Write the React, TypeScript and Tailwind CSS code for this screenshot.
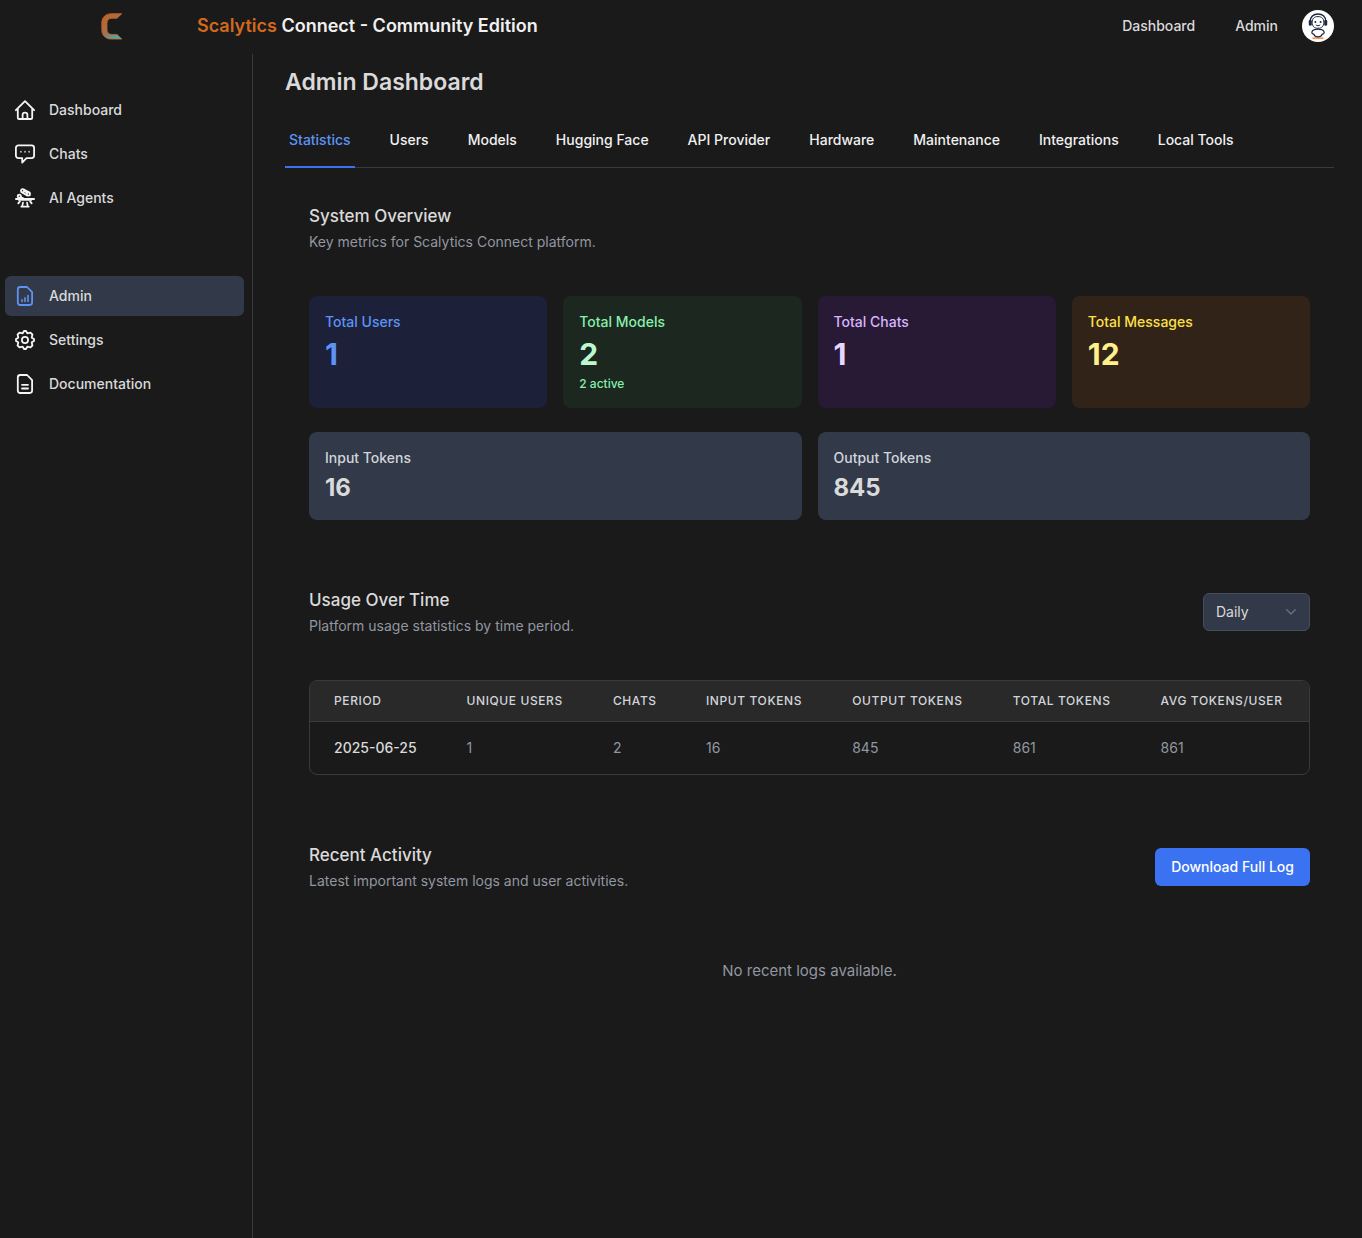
import React from 'react';

const cards = [
  { label: 'Total Users', value: '1', box: 'bg-[#1c2039]', labelColor: 'text-[#5d93f4]', valueColor: 'text-[#5d93f4]' },
  { label: 'Total Models', value: '2', note: '2 active', box: 'bg-[#1c271f]', labelColor: 'text-[#86efac]', valueColor: 'text-[#bbf7d0]' },
  { label: 'Total Chats', value: '1', box: 'bg-[#281934]', labelColor: 'text-[#d8b4fe]', valueColor: 'text-[#e9d5ff]' },
  { label: 'Total Messages', value: '12', box: 'bg-[#312318]', labelColor: 'text-[#fde047]', valueColor: 'text-[#fef08a]' },
];

const tabs = ['Statistics', 'Users', 'Models', 'Hugging Face', 'API Provider', 'Hardware', 'Maintenance', 'Integrations', 'Local Tools'];
const columns = ['Period', 'Unique Users', 'Chats', 'Input Tokens', 'Output Tokens', 'Total Tokens', 'Avg Tokens/User'];
const row = ['2025-06-25', '1', '2', '16', '845', '861', '861'];

function Icon({ children }: { children: React.ReactNode }) {
  return (
    <svg viewBox="0 0 20 20" className="size-5 shrink-0" fill="none" stroke="currentColor" strokeWidth="1.8" strokeLinecap="round" strokeLinejoin="round" aria-hidden="true">
      {children}
    </svg>
  );
}

const HomeIcon = () => (
  <Icon>
    <path d="M.9 10.2 10 1.1l9.1 9.1M2.8 8.6v9.1c0 .8.5 1.3 1.3 1.3h11.8c.8 0 1.300-.5 1.300-1.300V8.600" />
    <path d="M7.600 19v-4.300c0-1.200.9-2 2.400-2s2.400.8 2.400 2V19" />
  </Icon>
);

const ChatIcon = () => (
  <Icon>
    <path d="M3.400 1.400h13.200c1.500 0 2.500 1 2.500 2.500v7.700c0 1.500-1 2.500-2.500 2.500h-5.100L7.200 18.600v-4.500H3.400c-1.500 0-2.500-1-2.500-2.500V3.900c0-1.500 1-2.500 2.500-2.500Z" />
    <path d="M5.900 7.800h.01M10 7.800h.01M14.100 7.800h.01" strokeWidth="1.900" opacity=".7" />
  </Icon>
);

const AgentsIcon = () => (
  <Icon>
    <path d="M1 11h18" strokeWidth="2" />
    <path d="M3.600 12.200h12.800" strokeWidth="1.200" />
    <circle cx="4.300" cy="8.200" r="1.600" />
    <path d="m5.600 9 3 1.600" />
    <circle cx="7.600" cy="2.700" r="1.600" />
    <circle cx="13.400" cy="6" r="1.600" />
    <path d="m8.900 1.600 5.600 3M6.700 4.300l5.500 3.100M10 3.500l1.200.7" strokeWidth="1.800" />
    <path d="m3.300 15.400 1.600-2M16.700 15.400l-1.600-2" />
    <path d="m8 14.500-.8 3.800M12 14.500l.8 3.800M6.300 18.700h7.400" strokeWidth="1.700" />
  </Icon>
);

const filePath = 'M5.200 1h6.900L17.100 6.200v10.400c0 1.500-.9 2.400-2.400 2.400H5.200c-1.500 0-2.400-.9-2.400-2.400V3.400C2.800 1.900 3.700 1 5.200 1Z';

const ReportIcon = () => (
  <Icon>
    <path d={filePath} />
    <path d="M7 13.800v1.600M10 11.800v3.600M13 9.600v5.800" strokeWidth="1.600" />
  </Icon>
);

const DocumentIcon = () => (
  <Icon>
    <path d={filePath} />
    <path d="M7 10.800h6M7 14.500h6" />
  </Icon>
);

const GearIcon = () => (
  <Icon>
    <circle cx="10" cy="10" r="3.100" />
    <path d="M9 1h2l1.300 2.300 3.200-.7 1.900 1.900-.7 3.200L19 9v2l-2.300 1.300.7 3.200-1.900 1.900-3.200-.7L11 19H9l-1.300-2.300-3.200.7-1.900-1.900.7-3.200L1 11V9l2.300-1.300-.7-3.200 1.900-1.900 3.200.7Z" />
  </Icon>
);

function Logo() {
  return (
    <svg viewBox="0 0 22 27" className="h-[27px] w-[22px]" aria-label="Scalytics">
      <defs>
        <linearGradient id="logo-fill" x1="0" y1="0" x2=".75" y2="1">
          <stop offset="0" stopColor="#c4601f" />
          <stop offset=".55" stopColor="#a0714f" />
          <stop offset="1" stopColor="#3fb0bd" />
        </linearGradient>
      </defs>
      <path d="M20.800.7H10.500C4.500.7.8 4.400.8 10v6.800c0 5.600 3.700 9.300 9.700 9.300h10.300l-4.800-4.700h-5C7.700 21.400 6 19.700 6 16.400v-6.200C6 6.900 7.700 5.300 11 5.300h5Z" fill="url(#logo-fill)" stroke="#cc6220" strokeWidth=".8" />
    </svg>
  );
}

function Avatar() {
  return (
    <svg viewBox="0 0 32 32" className="size-8" aria-label="Profile">
      <circle cx="16" cy="16" r="16" fill="#fff" />
      <path d="M10.500 27.300h11v1.800h-11z" fill="#f6965a" />
      <g fill="none" stroke="#1b2740">
        <path d="M8.200 11.500C8.200 6.800 11.400 4 16 4s7.800 2.800 7.800 7.500" strokeWidth="1.600" />
        <path d="M10.200 12.300c0-3.900 2.100-5.700 5.800-5.700s5.800 1.800 5.800 5.700-2 6-5.800 6-5.800-2.100-5.800-6Z" strokeWidth="1" />
        <path d="M13.800 14.800c1.200 1.300 3.200 1.300 4.400 0" strokeWidth="1" />
        <path d="M12.400 19.600c-3.200 1-3.400 4.300-.6 4.600.6 1.800 2.200 2.600 4.200 2.600s3.600-.8 4.200-2.600c2.800-.3 2.600-3.600-.6-4.600-2-.5-5.200-.5-7.200 0Z" strokeWidth="1.200" />
      </g>
      <g fill="#1b2740">
        <rect x="6.800" y="9.800" width="3" height="6" rx="1.500" />
        <rect x="22.200" y="9.800" width="3" height="6" rx="1.500" />
        <circle cx="13.400" cy="12" r="1" />
        <circle cx="18.600" cy="12" r="1" />
      </g>
    </svg>
  );
}

function NavItem({ icon, label, active }: { icon: React.ReactNode; label: string; active?: boolean }) {
  return (
    <a
      href="#"
      aria-current={active ? 'page' : undefined}
      className={`flex h-10 items-center gap-3.5 rounded-md px-2.5 text-sm font-medium text-[#dadada] ${active ? 'bg-[#323949]' : ''}`}
    >
      <span className={active ? 'text-[#5d93f4]' : 'text-[#f5f5f5]'}>{icon}</span>
      {label}
    </a>
  );
}

function SectionTitle({ title, text, children }: { title: string; text: string; children?: React.ReactNode }) {
  return (
    <div className="flex items-center justify-between">
      <div>
        <h2 className="text-[17px]/6 font-medium text-[#dadada]">{title}</h2>
        <p className="mt-1 text-sm text-[#9196a1]">{text}</p>
      </div>
      {children}
    </div>
  );
}

export default function App() {
  return (
    <div className="flex min-h-screen flex-col bg-[#1a1a1a] font-['Inter',sans-serif] text-[#dadada] antialiased">
      <header className="mb-0.5 flex h-[52px] items-center pr-7">
        <div className="flex w-[197px] justify-center pl-[26px]">
          <Logo />
        </div>
        <p className="flex-1 text-lg font-semibold text-[#f0f0f0]">
          <span className="text-[#d2691e]">Scalytics</span> Connect - Community Edition
        </p>
        <nav className="flex items-center text-sm font-medium">
          <a href="#" className="mr-10">Dashboard</a>
          <a href="#" className="mr-6">Admin</a>
          <button type="button" aria-label="Profile menu"><Avatar /></button>
        </nav>
      </header>

      <div className="flex flex-1">
        <aside className="w-[253px] shrink-0 border-r border-[#3a3a3a] pt-9 pr-2 pl-[5px]">
          <nav className="flex flex-col gap-1">
            <NavItem icon={<HomeIcon />} label="Dashboard" />
            <NavItem icon={<ChatIcon />} label="Chats" />
            <NavItem icon={<AgentsIcon />} label="AI Agents" />
          </nav>
          <nav className="mt-[58px] flex flex-col gap-1">
            <NavItem icon={<ReportIcon />} label="Admin" active />
            <NavItem icon={<GearIcon />} label="Settings" />
            <NavItem icon={<DocumentIcon />} label="Documentation" />
          </nav>
        </aside>

        <main className="min-w-0 flex-1 pt-3 pr-7 pl-8">
          <h1 className="text-[23px]/8 font-semibold">Admin Dashboard</h1>

          <div role="tablist" className="mt-4 flex gap-[31px] border-b border-[#3a3a3a]">
            {tabs.map((tab, i) => (
              <button
                key={tab}
                type="button"
                role="tab"
                aria-selected={i === 0}
                className={`-mb-px border-b-2 px-1 py-4 text-sm font-medium whitespace-nowrap ${i === 0 ? 'border-[#3b72f2] text-[#5d93f4]' : 'border-transparent text-[#f0f0f0]'}`}
              >
                {tab}
              </button>
            ))}
          </div>

          <section className="px-6 pt-9">
            <SectionTitle title="System Overview" text="Key metrics for Scalytics Connect platform." />
            <div className="mt-11 grid grid-cols-4 gap-x-4 gap-y-6">
              {cards.map((card) => (
                <div key={card.label} className={`rounded-lg p-4 ${card.box}`}>
                  <p className={`text-sm font-medium ${card.labelColor}`}>{card.label}</p>
                  <p className={`mt-1 text-3xl font-bold ${card.valueColor}`}>{card.value}</p>
                  {card.note && <p className={`mt-1 text-xs font-medium ${card.labelColor}`}>{card.note}</p>}
                </div>
              ))}
              <div className="col-span-2 rounded-lg bg-[#323949] p-4">
                <p className="text-sm font-medium text-[#d1d5db]">Input Tokens</p>
                <p className="mt-1 text-2xl font-bold">16</p>
              </div>
              <div className="col-span-2 rounded-lg bg-[#323949] p-4">
                <p className="text-sm font-medium text-[#d1d5db]">Output Tokens</p>
                <p className="mt-1 text-2xl font-bold">845</p>
              </div>
            </div>
          </section>

          <section className="mt-8 px-6 pt-9">
            <SectionTitle title="Usage Over Time" text="Platform usage statistics by time period.">
              <div className="relative">
                <select aria-label="Time period" className="h-[38px] w-[107px] appearance-none rounded-md border border-[#454c5c] bg-[#323949] px-3 text-sm text-[#dadada]">
                  <option>Daily</option>
                  <option>Weekly</option>
                  <option>Monthly</option>
                </select>
                <svg viewBox="0 0 10 6" className="pointer-events-none absolute top-4 right-3.5 h-1.5 w-2.5" fill="none" stroke="#6b7280" strokeWidth="1.300" strokeLinecap="round" strokeLinejoin="round" aria-hidden="true">
                  <path d="m.8.8 4.200 4.200L9.200.8" />
                </svg>
              </div>
            </SectionTitle>
            <div className="mt-11 overflow-hidden rounded-lg border border-[#3a3a3a]">
              <table className="w-full text-left">
                <thead className="border-b border-[#3a3a3a] bg-[#292929]">
                  <tr>
                    {columns.map((column) => (
                      <th key={column} scope="col" className="px-6 py-3 text-xs font-medium tracking-wider whitespace-nowrap text-[#d1d5db] uppercase">{column}</th>
                    ))}
                  </tr>
                </thead>
                <tbody>
                  <tr>
                    {row.map((cell, i) => (
                      <td key={i} className={`px-6 py-4 text-sm whitespace-nowrap ${i === 0 ? 'font-medium text-[#dadada]' : 'text-[#9196a1]'}`}>{cell}</td>
                    ))}
                  </tr>
                </tbody>
              </table>
            </div>
          </section>

          <section className="mt-8 px-6 pt-9">
            <SectionTitle title="Recent Activity" text="Latest important system logs and user activities.">
              <button type="button" className="h-[38px] rounded-md bg-[#3b72f2] px-4 text-sm font-medium text-white">Download Full Log</button>
            </SectionTitle>
            <p className="mt-[68px] text-center text-[15px]/6 text-[#9196a1]">No recent logs available.</p>
          </section>
        </main>
      </div>
    </div>
  );
}
